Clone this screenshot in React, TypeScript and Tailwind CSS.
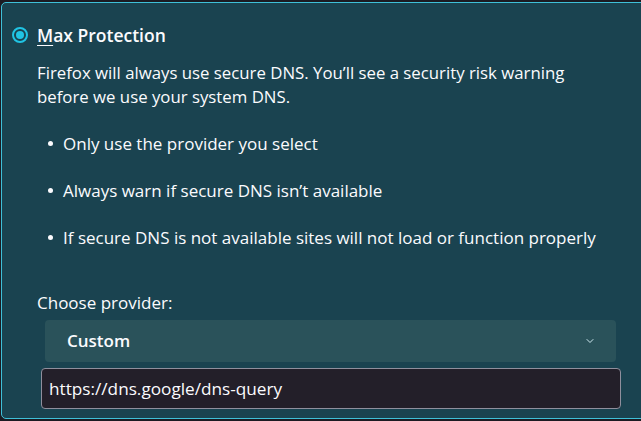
import { ChevronDown } from 'lucide-react'

const bullets = [
  'Only use the provider you select',
  'Always warn if secure DNS isn’t available',
  'If secure DNS is not available sites will not load or function properly',
]

export default function App() {
  return (
    <div
      className="h-[421px] w-[641px] overflow-hidden bg-[#1c1b22] pt-[2px] pl-px text-[#fbfbfe]"
      style={{ fontFamily: '"Open Sans", "Noto Sans", sans-serif' }}
    >
      <div className="w-[700px] h-[417px] rounded-[5px] border border-[#3fc0d8] bg-[#1a4350] pt-[21px]">
        {/* heading */}
        <div className="flex items-center pl-[10px]">
          <span className="flex h-[16px] w-[16px] items-center justify-center rounded-full border-2 border-[#20c4e4]">
            <span className="h-[8px] w-[8px] rounded-full bg-[#20c4e4]" />
          </span>
          <span className="ml-[9px] text-[17.5px] font-semibold leading-[22px]">
            <span className="underline underline-offset-[3px]">M</span>ax Protection
          </span>
        </div>

        <p className="mt-[15px] pl-[35px] text-[16.8px] leading-[24px] w-[590px]">
          Firefox will always use secure DNS. You’ll see a security risk warning before we use your system DNS.
        </p>

        <ul className="mt-[23px] flex flex-col gap-[24px] pl-[46px] text-[17px] leading-[23px]">
          {bullets.map(b => (
            <li key={b} className="flex items-center">
              <span className="mr-[10px] h-[5px] w-[5px] rounded-full bg-[#fbfbfe]" />
              {b}
            </li>
          ))}
        </ul>

        <div className="mt-[42px] pl-[35px] text-[17px] leading-[23px]">Choose provider:</div>

        <div className="mt-[6px] ml-[43px] flex h-[42px] w-[571px] items-center justify-between rounded-[4px] bg-[#2a525a] pl-[22px] pr-[20px]">
          <span className="text-[17px] font-semibold">Custom</span>
          <ChevronDown size={12} strokeWidth={2} className="text-[#cfe9f0]" />
        </div>

        <div className="mt-[6px] ml-[39px] flex h-[41px] w-[580px] items-center rounded-[4px] border border-[#8f8f9d] bg-[#231f29] px-[7px] text-[17.2px]">
          https://dns.google/dns-query
        </div>
      </div>
    </div>
  )
}
